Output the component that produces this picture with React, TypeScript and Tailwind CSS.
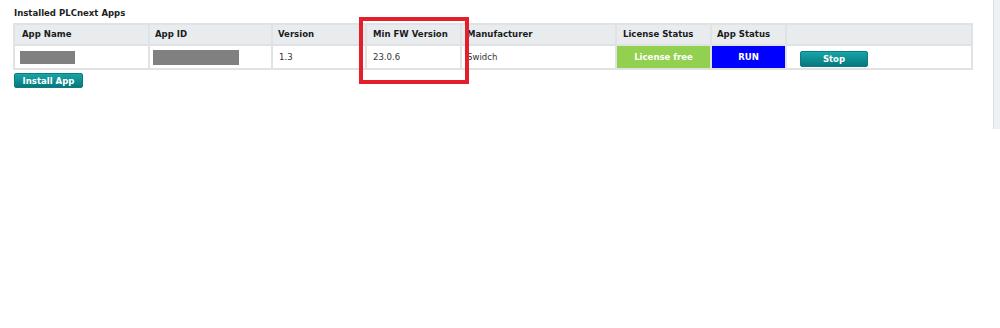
import React from "react";

const font = { fontFamily: '"DejaVu Sans Condensed", "DejaVu Sans", Verdana, sans-serif' };

export default function App() {
  return (
    <div className="relative w-[1000px] h-[328px] bg-white overflow-hidden" style={font}>
      <div className="pl-[14px] pt-[7px]">
        <div className="text-[9.5px] font-bold text-[#1e1e1e] leading-[12px] h-[16px]">Installed PLCnext Apps</div>
        <table className="table-fixed border-collapse w-[958px] -ml-[1px] text-[9.5px] border-2 border-[#e2e4e6]">
          <colgroup>
            <col className="w-[135px]" />
            <col className="w-[123px]" />
            <col className="w-[94px]" />
            <col className="w-[95px]" />
            <col className="w-[155px]" />
            <col className="w-[95px]" />
            <col className="w-[75px]" />
            <col className="w-[186px]" />
          </colgroup>
          <thead>
            <tr className="bg-[#e9ecef] h-[21px] text-[#1b1b1b] font-bold text-left">
              <th className="border-2 border-[#e0e2e4] pl-[7px] font-bold">App Name</th>
              <th className="border-2 border-[#e0e2e4] pl-[5px] font-bold">App ID</th>
              <th className="border-2 border-[#e0e2e4] pl-[5px] font-bold">Version</th>
              <th className="border-2 border-[#e0e2e4] pl-[6px] font-bold">Min FW Version</th>
              <th className="border-2 border-[#e0e2e4] pl-[5px] font-bold">Manufacturer</th>
              <th className="border-2 border-[#e0e2e4] pl-[6px] font-bold">License Status</th>
              <th className="border-2 border-[#e0e2e4] pl-[5px] font-bold">App Status</th>
              <th className="border-2 border-[#e0e2e4]"></th>
            </tr>
          </thead>
          <tbody>
            <tr className="h-[24px] text-[#333]">
              <td className="border-2 border-[#e0e2e4] pl-[5px]">
                <div className="w-[55px] h-[13px] bg-[#808080]" />
              </td>
              <td className="border-2 border-[#e0e2e4] pl-[3px]">
                <div className="w-[86px] h-[15px] bg-[#808080]" />
              </td>
              <td className="border-2 border-[#e0e2e4] pl-[6px]">1.3</td>
              <td className="border-2 border-[#e0e2e4] pl-[6px]">23.0.6</td>
              <td className="border-2 border-[#e0e2e4] pl-[5px]">Swidch</td>
              <td className="border-2 border-[#e0e2e4] bg-[#92d050] text-white font-bold text-center">License free</td>
              <td className="border-2 border-[#e0e2e4] bg-[#0000ff] text-white font-bold text-center">RUN</td>
              <td className="border-2 border-[#e0e2e4] pl-[13px]">
                <button className="block w-[68px] h-[16px] mt-[3px] rounded-[2px] border border-[#0b7c80] bg-gradient-to-b from-[#16a5a8] to-[#07787c] text-white font-bold text-[9.5px] leading-[14px]">Stop</button>
              </td>
            </tr>
          </tbody>
        </table>
        <button className="block mt-[3px] w-[69px] h-[15px] rounded-[2px] border border-[#0b7c80] bg-gradient-to-b from-[#16a5a8] to-[#07787c] text-white font-bold text-[9.5px] leading-[13px]">Install App</button>
      </div>
      <div className="absolute left-[359px] top-[17px] w-[110px] h-[67px] border-4 border-[#e3202a]" />
      <div className="absolute left-[993px] top-0 w-[7px] h-[129px] bg-[#eef1f4] border-l border-[#d9dee3]" />
    </div>
  );
}
